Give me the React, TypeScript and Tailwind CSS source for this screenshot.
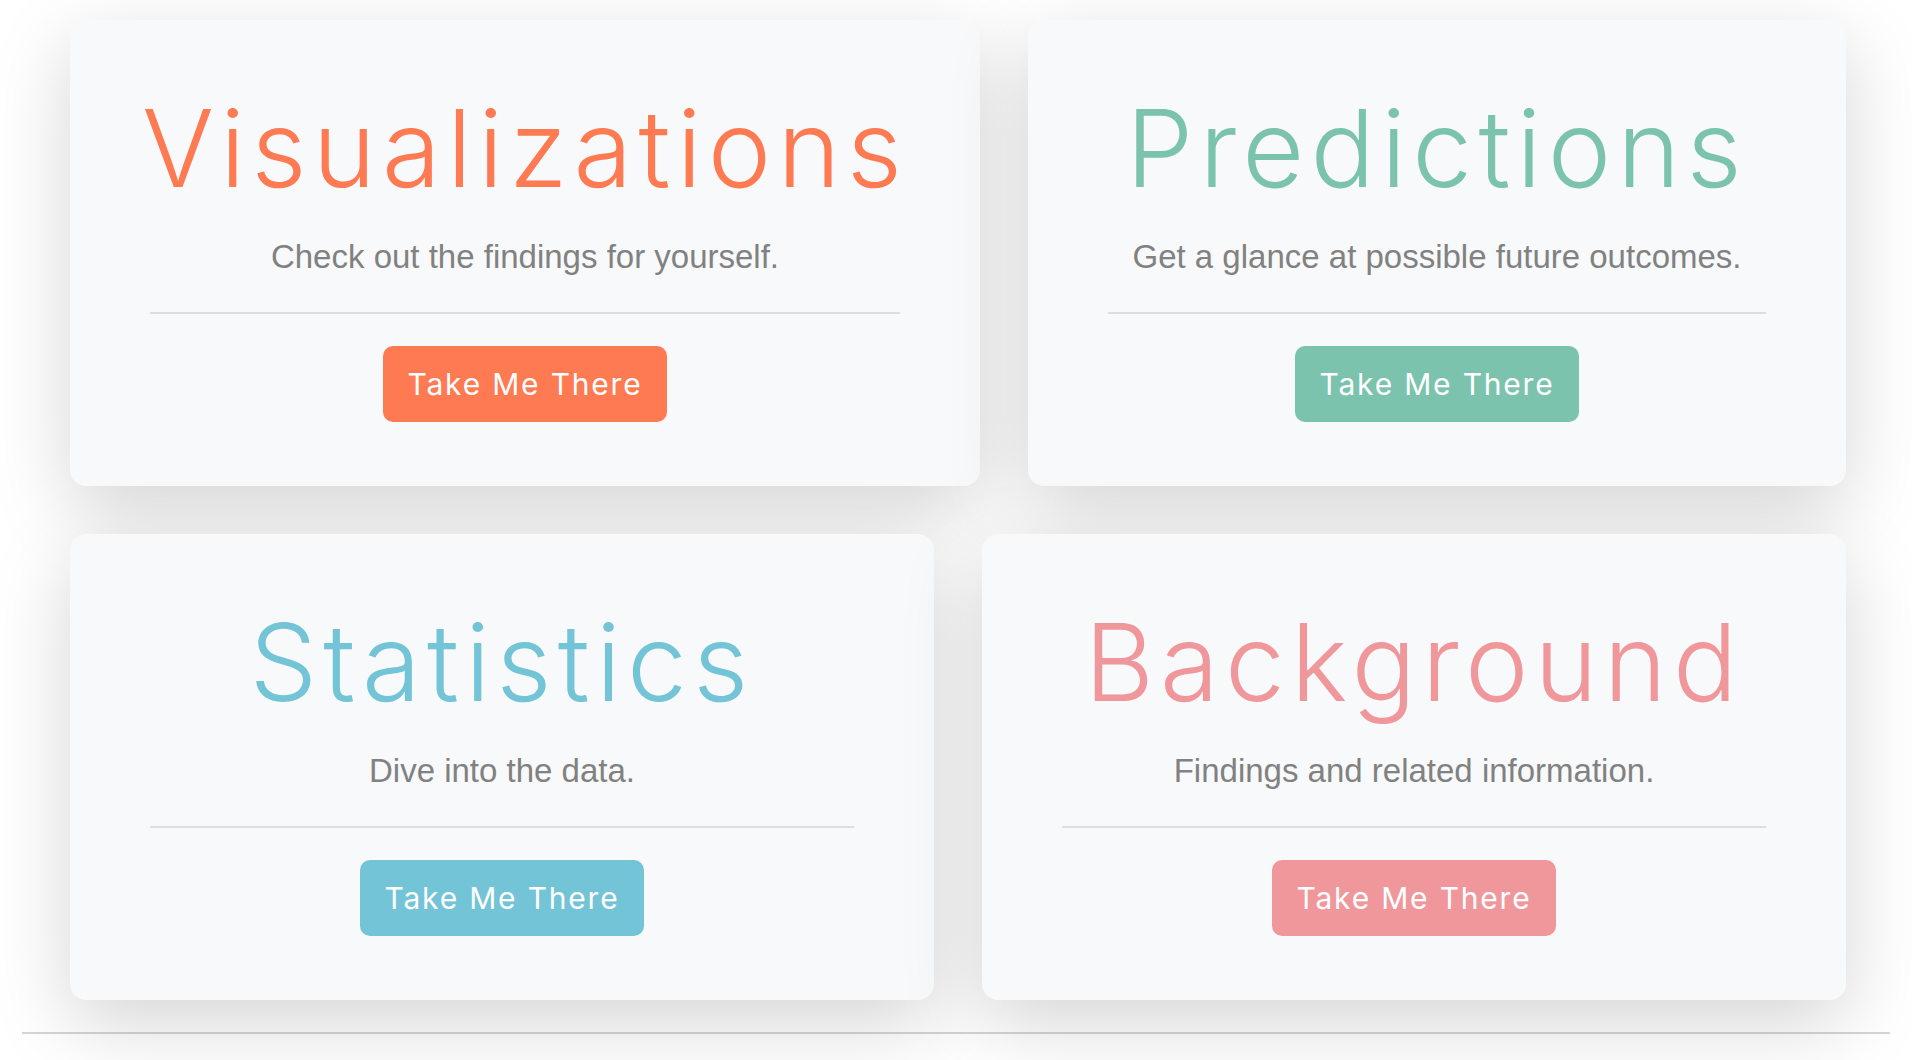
import React from "react";

type Card = {
  title: string;
  sub: string;
  color: string;
  btn: string;
  width: string;
};

function CardView({ c }: { c: Card }) {
  return (
    <div
      className={`${c.width} shrink-0 rounded-2xl bg-[#f8f9fa] px-[80px] pt-[75px] pb-[64px] shadow-[0_24px_80px_rgba(0,0,0,0.17)] flex flex-col items-center`}
    >
      <h1
        className={`${c.color} text-[107px] leading-none font-light tracking-[0.058em] whitespace-nowrap`}
        style={{ fontFamily: "Inter, 'Noto Sans', sans-serif" }}
      >
        {c.title}
      </h1>
      <p
        className="mt-[38px] text-[33px] leading-none text-[#818181] whitespace-nowrap"
        style={{ fontFamily: "'Liberation Sans', Arial, sans-serif" }}
      >
        {c.sub}
      </p>
      <div className="mt-[39px] h-[2px] w-full bg-[#dcdde0]" />
      <button
        className={`${c.btn} mt-[32px] h-[76px] w-[284px] rounded-[10px] text-white text-[30px] leading-none tracking-[0.06em]`}
        style={{ fontFamily: "Inter, 'Noto Sans', sans-serif" }}
      >
        Take Me There
      </button>
    </div>
  );
}

export default function App() {
  const row1: Card[] = [
    {
      title: "Visualizations",
      sub: "Check out the findings for yourself.",
      color: "text-[#fd7a52]",
      btn: "bg-[#fd7a52]",
      width: "w-[910px]",
    },
    {
      title: "Predictions",
      sub: "Get a glance at possible future outcomes.",
      color: "text-[#7cc3ae]",
      btn: "bg-[#7cc3ae]",
      width: "w-[818px]",
    },
  ];
  const row2: Card[] = [
    {
      title: "Statistics",
      sub: "Dive into the data.",
      color: "text-[#72c4d6]",
      btn: "bg-[#72c4d6]",
      width: "w-[864px]",
    },
    {
      title: "Background",
      sub: "Findings and related information.",
      color: "text-[#f0979b]",
      btn: "bg-[#f0979b]",
      width: "w-[864px]",
    },
  ];
  return (
    <div className="min-h-[1060px] w-full bg-white px-[22px] pt-[20px] overflow-hidden">
      <div className="px-[48px] flex flex-col gap-[48px]">
        <div className="flex gap-[48px]">
          {row1.map((c) => (
            <CardView key={c.title} c={c} />
          ))}
        </div>
        <div className="flex gap-[48px]">
          {row2.map((c) => (
            <CardView key={c.title} c={c} />
          ))}
        </div>
      </div>
      <div className="mt-[32px] h-[2px] w-full bg-[#d6d6d6]" />
    </div>
  );
}
